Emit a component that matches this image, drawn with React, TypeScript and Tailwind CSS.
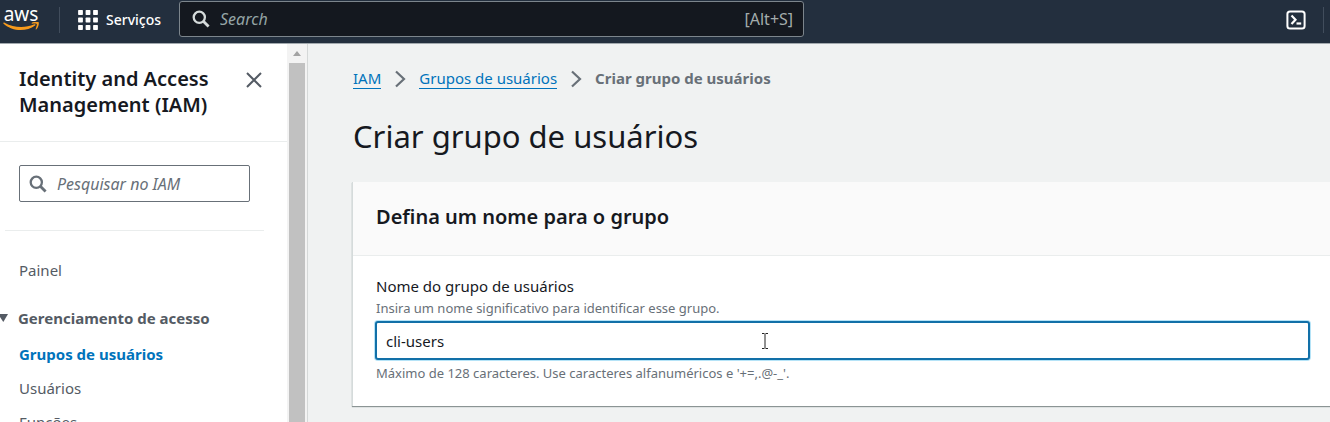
import React from "react";

function SearchIcon({ className }: { className: string }) {
  return (
    <svg viewBox="0 0 18 18" fill="none" stroke="currentColor" strokeWidth="2.3" className={className} aria-hidden="true">
      <circle cx="7.3" cy="7.3" r="5.6" />
      <path d="M11.3 11.3 16.6 16.6" strokeWidth="2.8" />
    </svg>
  );
}

function GridIcon() {
  const steps = [0, 7.5, 15];
  return (
    <svg viewBox="0 0 20 20" fill="currentColor" className="size-5" aria-hidden="true">
      {steps.map((y) => steps.map((x) => <rect key={`${x}-${y}`} x={x + 0.1} y={y + 0.1} width="4.8" height="4.8" rx="0.7" />))}
    </svg>
  );
}

function AwsLogo() {
  return (
    <a href="#" className="flex h-7 w-9 flex-col items-center text-white">
      <span className="h-4 text-[19px] leading-4">aws</span>
      <svg viewBox="0 0 36 10" className="h-[10px] w-9" fill="#f79a1c" aria-hidden="true">
        <path d="M.4.9C.7.5 1.1.5 1.6.8 11 6 22 6.4 31.3 2.3c1-.4 1.7.5.8 1.2C23.5 10 9.2 9.8.6 1.8.3 1.5.2 1.2.4.9Z" />
        <path d="M28.8.7C30.9-.4 35.2-.4 35.7.3c.5.8-.2 5-2.3 7-.5.5-.9.2-.7-.3.6-1.6 1.5-4.4 1-5-.5-.7-3.2-.5-4.6-.3-.5 0-.7-.5-.3-1Z" />
      </svg>
    </a>
  );
}

function TopBar() {
  return (
    <header className="flex h-11 shrink-0 items-start border-b border-[#a2a9ae] bg-[#232f3e] pt-px text-white">
      <div className="flex h-[37px] w-[179px] shrink-0 items-center pl-[3px]">
        <AwsLogo />
        <span className="ml-5 h-[26px] w-px bg-[#414d5c]" />
        <button type="button" className="ml-[18px] flex items-center gap-2 text-[14px] leading-5 font-medium">
          <GridIcon />
          Serviços
        </button>
      </div>
      <label className="flex h-9 w-[47%] items-center rounded-[3px] border border-[#7c858c] bg-[#14181f] pr-[10px] pl-3 text-[#a3acac]">
        <SearchIcon className="size-[18px] shrink-0 text-[#d5dbdb]" />
        <span className="sr-only">Search</span>
        <input type="search" placeholder="Search" className="ml-[10px] h-full min-w-0 flex-1 bg-transparent text-[16px] leading-6 outline-none placeholder:text-[#95a5a6] placeholder:italic" />
        <span className="text-[16px] leading-6">[Alt+S]</span>
      </label>
      <div className="ml-auto flex h-[37px] items-center pr-[6px]">
        <button type="button" aria-label="CloudShell" className="mr-[17px]">
          <svg viewBox="0 0 20 20" fill="none" stroke="currentColor" className="size-5" aria-hidden="true">
            <rect x="1.4" y="1.4" width="17.2" height="17.2" rx="2.6" strokeWidth="2" />
            <path d="m5.5 5.5 4 4.2-4 4.3" strokeWidth="2.2" />
            <path d="M10.5 13.5h4.7" strokeWidth="2.2" />
          </svg>
        </button>
        <span className="h-[26px] w-px bg-[#414d5c]" />
      </div>
    </header>
  );
}

function Sidebar() {
  return (
    <aside className="flex w-[308px] shrink-0 border-r border-[#d5d8d8] bg-[#f3f3f3]">
      <nav className="flex min-w-0 flex-1 flex-col overflow-hidden bg-white text-[#545b64]">
        <div className="flex shrink-0 items-start justify-between border-b border-[#eaeded] pt-[22px] pr-[25px] pb-[23px] pl-[19px]">
          <h2 className="text-[20px] leading-[26px] font-semibold text-[#16191f]">
            Identity and Access
            <br />
            Management (IAM)
          </h2>
          <button type="button" aria-label="Fechar" className="mt-[6px]">
            <svg viewBox="0 0 16 16" fill="none" stroke="currentColor" strokeWidth="2" className="size-4" aria-hidden="true">
              <path d="m1 1 14 14M15 1 1 15" />
            </svg>
          </button>
        </div>
        <label className="mt-[23px] mr-[37px] ml-[19px] flex h-[37px] shrink-0 items-center rounded-[2px] border border-[#687078] px-[9px]">
          <SearchIcon className="size-[18px] shrink-0 text-[#687078]" />
          <span className="sr-only">Pesquisar no IAM</span>
          <input type="search" placeholder="Pesquisar no IAM" className="ml-[10px] h-full min-w-0 flex-1 bg-transparent text-[16px] leading-6 outline-none placeholder:text-[#687078] placeholder:italic" />
        </label>
        <hr className="mt-7 mr-[23px] ml-[5px] shrink-0 border-[#eaeded]" />
        <ul className="mt-7 text-[15px] leading-[22px]">
          <li className="pl-[19px]">
            <a href="#">Painel</a>
          </li>
          <li className="mt-[26px]">
            <button type="button" className="flex items-center text-[15px] leading-[22px] font-bold">
              <svg viewBox="0 0 8 8" className="mr-[10px] size-2 shrink-0" fill="currentColor" aria-hidden="true">
                <path d="M-2 0h10L3.3 8Z" />
              </svg>
              Gerenciamento de acesso
            </button>
            <ul className="mt-[14px] flex flex-col gap-3 pl-[19px]">
              <li>
                <a href="#" aria-current="page" className="font-bold text-[#0073bb]">Grupos de usuários</a>
              </li>
              <li>
                <a href="#">Usuários</a>
              </li>
              <li>
                <a href="#">Funções</a>
              </li>
            </ul>
          </li>
        </ul>
      </nav>
      <div className="flex w-5 flex-col pr-[2px] pl-[2px]" aria-hidden="true">
        <div className="flex h-[19px] items-center justify-center">
          <svg viewBox="0 0 8 5" className="h-[5px] w-2" fill="#a3a3a3">
            <path d="M4 0 8 5H0Z" />
          </svg>
        </div>
        <div className="flex-1 bg-[#c1c1c1]" />
      </div>
    </aside>
  );
}

function Chevron() {
  return (
    <svg viewBox="0 0 12 18" fill="none" stroke="#687078" strokeWidth="2.2" className="h-[18px] w-3 shrink-0" aria-hidden="true">
      <path d="m2 1.5 8 7.5-8 7.5" />
    </svg>
  );
}

function Breadcrumbs() {
  return (
    <nav className="flex items-center gap-[13px] pl-px text-[15px] leading-[19px]" aria-label="Trilha">
      <a href="#" className="border-b border-[#0073bb] text-[#0073bb]">IAM</a>
      <Chevron />
      <a href="#" className="border-b border-[#0073bb] text-[#0073bb]">Grupos de usuários</a>
      <Chevron />
      <span className="border-b border-transparent font-bold text-[#687078]">Criar grupo de usuários</span>
    </nav>
  );
}

function TextCursor() {
  return (
    <svg viewBox="0 0 8 16" fill="none" stroke="#222" className="pointer-events-none absolute top-3 left-[386px] h-4 w-2" aria-hidden="true">
      <path d="M1 .5h2.5M4.5.5H7M4 1v14M1 15.5h2.5M4.5 15.5H7" />
    </svg>
  );
}

export default function App() {
  return (
    <div className="flex h-screen flex-col overflow-hidden bg-[#f0f2f2] font-['Noto_Sans',sans-serif] text-[#16191f]">
      <TopBar />
      <div className="flex min-h-0 flex-1">
        <Sidebar />
        <main className="min-w-0 flex-1 pt-[25px] pl-11">
          <Breadcrumbs />
          <h1 className="mt-[27px] pl-px text-[31px] leading-10">Criar grupo de usuários</h1>
          <section className="mt-[26px] border-l border-[#d5dbdb] bg-white shadow-[0_1px_1px_#8b9494]">
            <div className="border-b border-[#eaeded] bg-[#fafafa] px-[23px] pt-5 pb-6">
              <h2 className="text-[20px] leading-[29px] font-semibold">Defina um nome para o grupo</h2>
            </div>
            <div className="flex flex-col pt-[19px] pr-5 pb-[22px] pl-[22px]">
              <label htmlFor="group-name" className="pl-px text-[15px] leading-[22px]">Nome do grupo de usuários</label>
              <p className="pl-px text-[13px] leading-[22px] text-[#687078]">Insira um nome significativo para identificar esse grupo.</p>
              <div className="relative mt-[2px]">
                <input id="group-name" type="text" defaultValue="cli-users" className="h-[39px] w-full rounded-[3px] border-2 border-[#1270a8] bg-white px-[9px] text-[15px] leading-5 shadow-[0_0_0_1px_#b5e3f7] outline-none" />
                <TextCursor />
              </div>
              <p className="mt-[2px] pl-px text-[13px] leading-[22px] text-[#687078]">Máximo de 128 caracteres. Use caracteres alfanuméricos e '+=,.@-_'.</p>
            </div>
          </section>
        </main>
      </div>
    </div>
  );
}
